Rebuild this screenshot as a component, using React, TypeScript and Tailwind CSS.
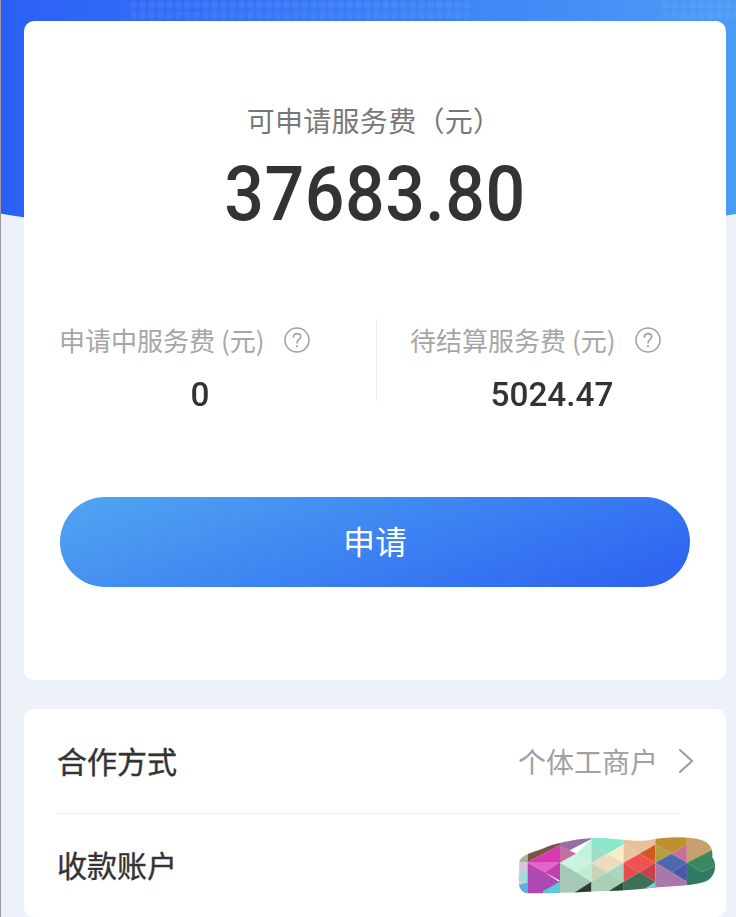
const CJK = "font-['Noto_Sans_CJK_SC','Noto_Sans',sans-serif]";

function Help() {
  return (
    <svg width="26" height="26" viewBox="0 0 26 26" fill="none" className="shrink-0">
      <circle cx="13" cy="13" r="12" stroke="#a3a3a3" strokeWidth="1.6" />
      <path d="M9.4 10.2c0-2.2 1.6-3.6 3.7-3.6s3.6 1.3 3.6 3.2c0 2.8-3.7 2.9-3.7 5.9" stroke="#a3a3a3" strokeWidth="1.7" strokeLinecap="round" />
      <circle cx="13" cy="19.3" r="1.1" fill="#a3a3a3" />
    </svg>
  );
}

function Stat({ label, value, className }: { label: string; value: string; className: string }) {
  return (
    <div className={className}>
      <div className="flex items-center h-[42px] text-[26px] leading-[42px] text-[#a6a6a6] whitespace-nowrap -ml-[1px]">
        <span>{label}</span>
        <span className="ml-[6px]">(元)</span>
        <span className="ml-[19px]"><Help /></span>
      </div>
      <div className="mt-[11px] text-center font-['Roboto',sans-serif] font-medium text-[34px] leading-[44px] text-[#333] scale-x-[0.98]">
        {value}
      </div>
    </div>
  );
}

const tris: [string, string][] = [
  ["60,40 100,40 100,230 60,230", "#e4c8d8"],
  ["60,120 95,120 95,165 60,165", "#d8c4dc"],
  ["60,165 95,140 95,190", "#a0e0dc"],
  ["60,190 95,180 95,230 60,230", "#5cb0dc"],
  ["60,40 95,40 95,120 60,120", "#a8b494"],
  ["95,40 190,40 190,70 95,120", "#7a5444"],
  ["95,120 190,70 190,120", "#d838b0"],
  ["95,120 190,120 145,150", "#e264c8"],
  ["95,120 145,150 95,180", "#d850c0"],
  ["145,150 190,120 190,175", "#c040b4"],
  ["95,125 145,150 190,180 95,230", "#b048b4"],
  ["190,175 190,230 95,230", "#b048b4"],
  ["140,205 190,178 190,230 140,230", "#58ccd8"],
  ["190,40 283,40 283,52 190,100", "#9a6ca4"],
  ["190,70 238,95 190,122", "#c470a0"],
  ["238,95 283,52 283,122", "#c0f2e0"],
  ["190,122 238,95 283,122 238,150", "#c8f4e0"],
  ["238,150 283,122 283,178", "#c0ecd4"],
  ["190,122 238,150 283,178 283,230 190,230", "#a6c8b8"],
  ["230,212 283,178 283,230 230,230", "#2c3e30"],
  ["283,40 378,40 378,68 330,95 283,68", "#8ce6cc"],
  ["283,68 330,95 283,122", "#9cdcc8"],
  ["330,95 378,68 378,122", "#f6eec8"],
  ["283,122 330,95 378,122 330,150", "#ecdcc0"],
  ["283,122 330,150 283,178", "#c8d4b8"],
  ["330,150 378,122 378,178", "#a8d8c0"],
  ["283,178 330,150 378,178 378,230 283,230", "#a8d0b4"],
  ["335,205 378,178 378,230 335,230", "#2e4a30"],
  ["378,40 472,40 472,68 425,95 378,68", "#eac09c"],
  ["378,68 425,95 378,122", "#e8c4a0"],
  ["425,95 472,68 472,122", "#d05a20"],
  ["378,122 425,95 472,122 425,150", "#f05252"],
  ["425,150 472,122 472,178", "#c84048"],
  ["378,122 425,150 378,178", "#e84c50"],
  ["378,178 425,150 472,178 472,230 378,230", "#3e7058"],
  ["430,205 472,178 472,230", "#7ad0d0"],
  ["472,40 565,40 565,68 520,95 472,68", "#c09030"],
  ["472,68 520,95 472,122", "#b0a040"],
  ["520,95 565,68 565,122", "#c86e98"],
  ["472,122 520,95 565,122 520,150", "#4c68b0"],
  ["520,150 565,122 565,178", "#4a58a8"],
  ["472,122 520,150 565,178 565,230 472,230", "#a878a8"],
  ["565,40 660,40 660,80 565,122", "#c8a070"],
  ["565,122 640,85 660,85 660,125 610,150", "#3a8860"],
  ["565,122 610,150 660,125 660,230 565,230", "#2f7a62"],
];

function Mosaic() {
  return (
    <svg width="203" height="61" viewBox="60 40 600 180" className="shrink-0 blur-[0.5px]">
      <defs>
        <clipPath id="blob">
          <path d="M70 120C75 95 120 90 150 75C190 60 250 50 300 48C350 48 400 62 450 55C500 45 570 42 610 55C640 65 642 90 640 105C655 125 650 160 625 175C590 190 530 190 470 195C400 205 300 205 230 210C180 210 120 215 90 212C65 205 65 170 70 150Z" />
        </clipPath>
      </defs>
      <g clipPath="url(#blob)">
        {tris.map(([p, c], i) => (
          <polygon key={i} points={p} fill={c} />
        ))}
      </g>
    </svg>
  );
}

export default function App() {
  return (
    <div className={`relative h-[917px] w-[736px] overflow-hidden bg-[#edf1f9] border-l border-[#9a9aa0] ${CJK}`}>
      <div className="absolute left-[-200px] top-0 w-[1136px] h-[240px] rounded-b-[568px_110px] bg-[linear-gradient(90deg,#2a5ff5_17%,#4c9cf6_83%)]" />
      <div className="absolute left-[128px] top-0 w-[342px] h-[20px] opacity-10 bg-[radial-gradient(#a8ccff_3px,transparent_4px)] bg-[length:9px_10px]" />
      <div className="absolute left-[660px] top-0 w-[76px] h-[20px] opacity-10 bg-[radial-gradient(#a8ccff_3px,transparent_4px)] bg-[length:9px_10px]" />

      <div className="relative flex flex-col gap-[29px] pt-[21px] pl-[23px] pr-[10px]">
        <section className="h-[659px] rounded-[10px] bg-white pt-[78px] px-[36px] flex flex-col">
          <div className="text-center text-[28px] leading-[42px] tracking-[0.3px] text-[#787878] pr-[2px]">可申请服务费（元）</div>
          <div className="mt-[9px] text-center font-['Roboto',sans-serif] font-medium text-[76px] leading-[88px] text-[#333] scale-x-[0.92] tracking-[0.5px]">
            37683.80
          </div>
          <div className="mt-[81px] flex h-[92px] items-stretch">
            <Stat label="申请中服务费" value="0" className="w-[280px] shrink-0" />
            <div className="w-px h-[82px] bg-[#ececec] ml-[36px] shrink-0" />
            <Stat label="待结算服务费" value="5024.47" className="ml-[34px] w-[282px] shrink-0" />
          </div>
          <button className="mt-[86px] h-[90px] rounded-[45px] pb-[4px] bg-[linear-gradient(160deg,#50a6f1,#2b60f1)] text-white text-[32px]">
            申请
          </button>
        </section>

        <section className="h-[208px] rounded-[10px] bg-white pl-[33px] pr-[32px]">
          <div className="h-[105px] flex items-center justify-between border-b border-[#eeeeee] mr-[16px]">
            <span className="text-[30px] text-[#333] leading-[40px] -mt-[3px] [-webkit-text-stroke:0.4px_#333]">合作方式</span>
            <span className="flex items-center text-[28px] text-[#a0a0a0] -mr-[16px]">
              个体工商户
              <svg width="16" height="26" viewBox="0 0 16 26" fill="none" className="ml-[20px]">
                <path d="M2 2l12 11L2 24" stroke="#9a9a9a" strokeWidth="2" strokeLinecap="round" strokeLinejoin="round" />
              </svg>
            </span>
          </div>
          <div className="h-[103px] flex items-center justify-between mr-[-25px]">
            <span className="text-[30px] text-[#333] leading-[40px] -mt-[3px] [-webkit-text-stroke:0.4px_#333]">收款账户</span>
            <Mosaic />
          </div>
        </section>
      </div>
    </div>
  );
}
